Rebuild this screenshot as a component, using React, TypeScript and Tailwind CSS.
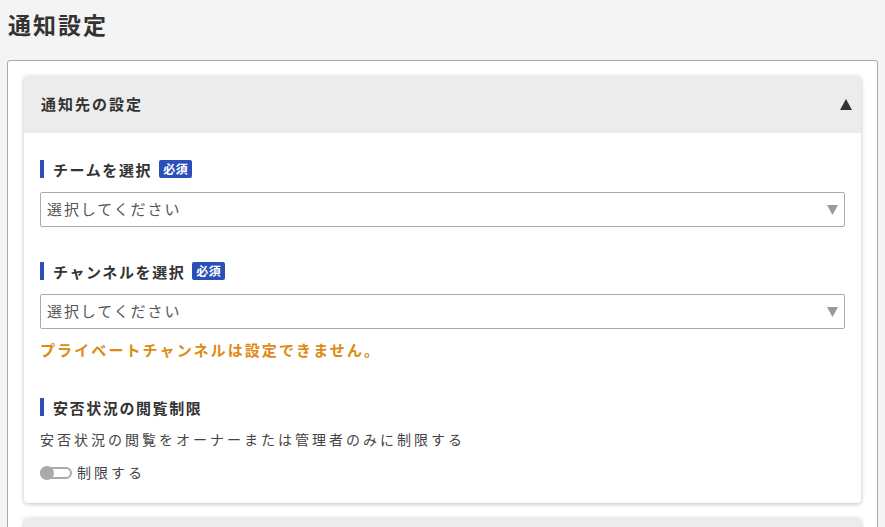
const font = { fontFamily: '"Noto Sans CJK JP", "Noto Sans", sans-serif' };

function Label({ text, required }: { text: string; required?: boolean }) {
    return (
        <div className="flex items-center h-[18px]">
            <span className="w-[4px] h-[18px] bg-[#2b4fb8]" />
            <span className="ml-[9px] text-[15px] font-bold text-[#333] tracking-[1.6px] leading-none">{text}</span>
            {required && (
                <span className="ml-[7px] bg-[#2b4fb8] text-white text-[12px] font-bold rounded-[2px] px-[4px] h-[18px] flex items-center leading-none tracking-[0.5px]">
                    必須
                </span>
            )}
        </div>
    );
}

function SelectBox() {
    return (
        <div className="mt-[14px] h-[35px] border border-[#aaa] rounded-[2px] bg-white flex items-center justify-between pl-[6px] pr-[6px]">
            <span className="text-[15px] text-[#555] tracking-[1.9px]">選択してください</span>
            <svg width="11" height="10" viewBox="0 0 11 10">
                <polygon points="0,0 11,0 5.5,10" fill="#9a9a9a" />
            </svg>
        </div>
    );
}

export default function App() {
    return (
        <div className="min-h-[527px] bg-[#f4f4f4] px-[7px] pt-[8px]" style={font}>
            <h1 className="ml-[1px] text-[23px] font-bold text-[#333] tracking-[2px] leading-[32px]">通知設定</h1>

            <div className="mt-[20px] w-[871px] border border-[#aaa] rounded-[3px] bg-white px-[16px] pt-[15px] pb-[40px]">
                <div className="rounded-[4px] bg-white shadow-[0_1px_4px_rgba(0,0,0,0.25)] overflow-hidden">
                    <div className="h-[57px] bg-[#ececec] flex items-center justify-between pl-[17px] pr-[9px]">
                        <span className="text-[15px] font-bold text-[#333] tracking-[2px]">通知先の設定</span>
                        <svg width="12" height="11" viewBox="0 0 12 11">
                            <polygon points="6,0 12,11 0,11" fill="#333" />
                        </svg>
                    </div>

                    <div className="pl-[16px] pr-[16px] pt-[27px] pb-[20px]">
                        <Label text="チームを選択" required />
                        <SelectBox />

                        <div className="mt-[35px]">
                            <Label text="チャンネルを選択" required />
                        </div>
                        <SelectBox />
                        <p className="mt-[10px] text-[15px] font-bold text-[#dd8a12] tracking-[2.1px] leading-[22px]">
                            プライベートチャンネルは設定できません。
                        </p>

                        <div className="mt-[37px]">
                            <Label text="安否状況の閲覧制限" />
                        </div>
                        <p className="mt-[12px] text-[14px] text-[#444] tracking-[3px] leading-[22px]">
                            安否状況の閲覧をオーナーまたは管理者のみに制限する
                        </p>
                        <div className="mt-[12px] flex items-center">
                            <div className="relative w-[32px] h-[12px] border-2 border-[#aaa] rounded-full bg-white">
                                <span className="absolute left-[-2px] top-[-3px] w-[14px] h-[14px] rounded-full bg-[#aaa]" />
                            </div>
                            <span className="ml-[5px] text-[14px] text-[#444] tracking-[3px]">制限する</span>
                        </div>
                    </div>
                </div>

                <div className="mt-[15px] h-[57px] rounded-[4px] bg-[#ececec] shadow-[0_1px_4px_rgba(0,0,0,0.25)]" />
            </div>
        </div>
    );
}
